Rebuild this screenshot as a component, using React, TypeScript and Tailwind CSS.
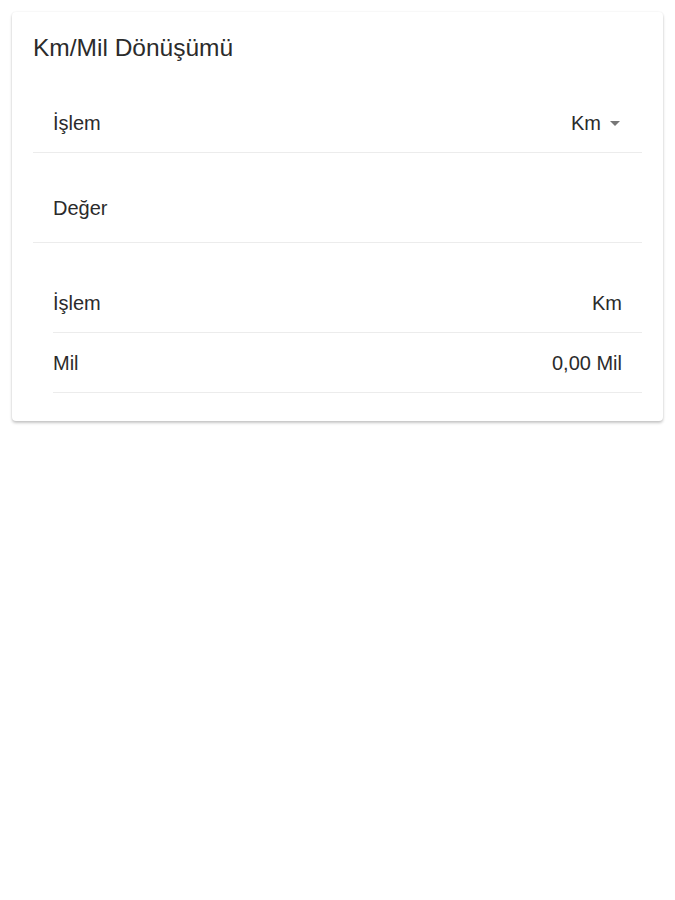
export default function App() {
  return (
    <div className="min-h-[900px] bg-white p-3 font-['Liberation_Sans',Arial,sans-serif] text-[#2b2b2b]">
      <div className="rounded-[4px] bg-white px-[21px] pt-[22px] pb-[28px] shadow-[0_2px_3px_rgba(0,0,0,0.22),0_0_2px_rgba(0,0,0,0.08)]">
        <h1 className="text-[24.5px] leading-[28px]">Km/Mil Dönüşümü</h1>

        <div className="mt-[31px] flex h-[60px] items-center justify-between border-b border-[#ececec] pl-[20px] pr-[22px] text-[20px]">
          <span>İşlem</span>
          <span className="flex items-center gap-[9px]">
            Km
            <svg width="10" height="5" viewBox="0 0 10 5" className="mt-[1px]">
              <path d="M0 0h10L5 5z" fill="#777" />
            </svg>
          </span>
        </div>

        <div className="flex h-[90px] items-start border-b border-[#ececec] pl-[20px] pt-[43px] text-[20px] leading-[24px]">
          <span>Değer</span>
        </div>

        <div className="mt-[30px] ml-[20px] text-[20px]">
          <div className="flex h-[60px] items-center justify-between border-b border-[#ececec] pr-[20px]">
            <span>İşlem</span>
            <span>Km</span>
          </div>
          <div className="flex h-[60px] items-center justify-between border-b border-[#ececec] pr-[20px]">
            <span>Mil</span>
            <span>0,00 Mil</span>
          </div>
        </div>
      </div>
    </div>
  );
}
